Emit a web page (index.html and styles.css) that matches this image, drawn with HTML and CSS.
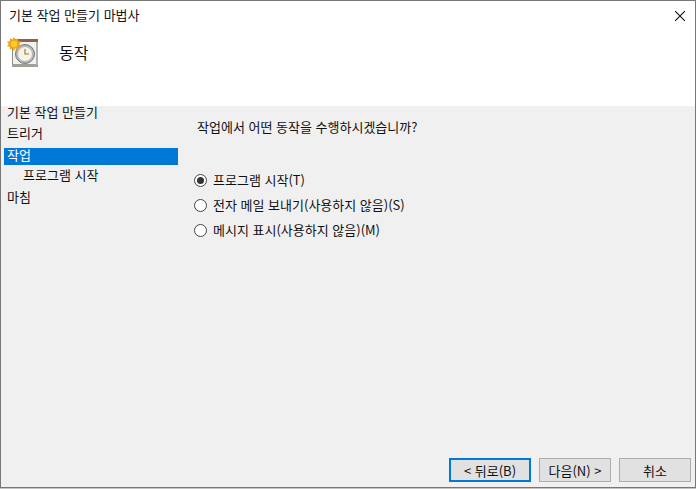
FILE: index.html
```html
<!DOCTYPE html>
<html lang="ko">
<head>
<meta charset="utf-8">
<title>기본 작업 만들기 마법사</title>
<link rel="stylesheet" href="styles.css">
</head>
<body>
<div class="window">
  <div class="head">
    <div class="titlebar">
      <span class="title">기본 작업 만들기 마법사</span>
      <svg class="close" width="10" height="10" viewBox="0 0 10 10"><path d="M0 0L10 10M10 0L0 10" stroke="#111" stroke-width="1.1" fill="none"/></svg>
    </div>
    <div class="banner">
      <svg class="task-icon" width="32" height="32" viewBox="0 0 32 32">
        <rect x="5.500" y="3.500" width="25" height="26" fill="#f4f2ec" stroke="#8f8f88"/>
        <rect x="5" y="27" width="26" height="3" fill="#a0a09a"/>
        <rect x="8" y="2" width="23" height="3" fill="#8f6148"/>
        <rect x="29" y="5" width="2" height="23" fill="#b4b4ae"/>
        <circle cx="18" cy="17" r="9.500" fill="#b5b8ba" stroke="#74787c"/>
        <circle cx="18" cy="17" r="7" fill="#f6f3e6"/>
        <path d="M18 12v5h4" stroke="#9a7b3c" stroke-width="1.200" fill="none"/>
        <path d="M7 0l1.500 2.600L11 1.200l.2 3 2.800.4-1.700 2.300 1.700 2.300-2.800.5-.2 3-2.600-1.500L7 14l-1.400-2.800-2.600 1.500-.2-3L0 9.200l1.700-2.300L0 4.600l2.800-.4.2-3 2.600 1.400z" fill="#f0a416"/>
        <circle cx="7" cy="7" r="3.200" fill="#f9c930"/>
      </svg>
      <span class="heading">동작</span>
    </div>
  </div>
  <div class="body">
    <nav class="steps">
      <div class="step">기본 작업 만들기</div>
      <div class="step">트리거</div>
      <div class="step active">작업</div>
      <div class="step sub">프로그램 시작</div>
      <div class="step">마침</div>
    </nav>
    <main class="content">
      <p class="question">작업에서 어떤 동작을 수행하시겠습니까?</p>
      <div class="options">
        <div class="option"><span class="radio checked"></span><span class="label">프로그램 시작(T)</span></div>
        <div class="option"><span class="radio"></span><span class="label">전자 메일 보내기(사용하지 않음)(S)</span></div>
        <div class="option"><span class="radio"></span><span class="label">메시지 표시(사용하지 않음)(M)</span></div>
      </div>
    </main>
  </div>
  <div class="footer">
    <button class="btn primary">&lt; 뒤로(B)</button>
    <button class="btn">다음(N) &gt;</button>
    <button class="btn">취소</button>
  </div>
</div>
</body>
</html>
```
FILE: styles.css
```css
* { box-sizing: border-box; }
html, body { margin: 0; padding: 0; height: 100%; background: #c4c4c4; }
body { font-family: "Noto Sans CJK KR", "Liberation Sans", sans-serif; font-size: 13px; color: #111; overflow: hidden; }
.window { width: 696px; height: 488px; display: flex; flex-direction: column; border: 1px solid #777; background: #f0f0f0; }
.head { height: 105px; background: #fff; flex: none; }
.titlebar { height: 29px; display: flex; align-items: center; justify-content: space-between; padding: 0 8px; }
.title { padding-bottom: 2px; }
.close { margin-right: 2px; }
.banner { display: flex; align-items: center; padding: 7px 0 0 6px; }
.task-icon { flex: none; }
.heading { font-size: 16px; margin-left: 20px; color: #111; line-height: 20px; padding-bottom: 2px; }
.body { flex: 1; display: flex; min-height: 0; }
.steps { width: 177px; flex: none; padding: 0 0 0 3px; }
.step { height: 22px; line-height: 16px; padding: 0 0 0 3px; }
.step:first-child { height: 19px; line-height: 12px; }
.step:nth-child(2) { height: 20px; line-height: 16px; }
.step.active { height: 17px; line-height: 13px; margin: 3px 0 0; background: #0078d7; color: #fff; }
.step.sub { padding-left: 19px; height: 22px; line-height: 16px; margin-top: 2px; }
.content { flex: 1; padding: 12px 0 0 19px; }
.question { margin: 0; line-height: 17px; }
.options { margin-top: 37px; margin-left: -3px; display: flex; flex-direction: column; gap: 8px; }
.option { display: flex; align-items: center; gap: 6px; height: 17px; }
.label { padding-bottom: 2px; }
.radio { width: 13px; height: 13px; border-radius: 50%; border: 1px solid #444; background: #fff; flex: none; display: flex; align-items: center; justify-content: center; }
.radio.checked::after { content: ""; width: 7px; height: 7px; border-radius: 50%; background: #333; }
.footer { height: 37px; flex: none; display: flex; justify-content: flex-end; align-items: flex-start; gap: 8px; padding: 8px 4px 0 0; }
.btn { width: 72px; height: 24px; border: 1px solid #adadad; background: #e1e1e1; font: inherit; color: #111; padding: 0; }
.btn.primary { width: 82px; border: 2px solid #0078d7; }
```
